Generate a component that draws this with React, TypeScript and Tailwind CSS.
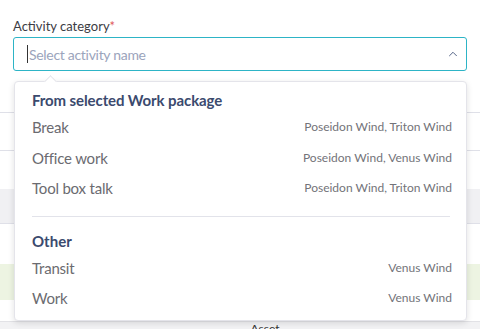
import { ChevronUp } from "lucide-react";

const fromPackage = [
  { name: "Break", sites: "Poseidon Wind, Triton Wind" },
  { name: "Office work", sites: "Poseidon Wind, Venus Wind" },
  { name: "Tool box talk", sites: "Poseidon Wind, Triton Wind" },
];

const other = [
  { name: "Transit", sites: "Venus Wind" },
  { name: "Work", sites: "Venus Wind" },
];

function Option({ name, sites }: { name: string; sites: string }) {
  return (
    <div className="flex h-[30.5px] items-center justify-between">
      <span className="text-[15px] tracking-[-0.2px] text-[#6b6b70]">{name}</span>
      <span className="text-[12px] text-[#737379]">{sites}</span>
    </div>
  );
}

export default function App() {
  return (
    <div className="relative h-[329px] w-[480px] overflow-hidden bg-white font-['Lato',sans-serif]">
      <div className="px-[13px] pt-[18px]">
        <label className="block text-[13px] leading-[17px] text-[#3c3c44]">
          Activity category<span className="text-[#e05a5a]">*</span>
        </label>
        <div className="mt-[2px] flex h-[34px] items-center rounded-[3px] border border-[#2db4c6] pl-[13px] pr-[6px]">
          <span className="mr-[1px] h-[18px] w-px bg-[#333]" />
          <span className="flex-1 text-[14px] tracking-[-0.3px] text-[#9ba4bc]">Select activity name</span>
          <ChevronUp className="h-[14px] w-[14px] text-[#4a5a80]" strokeWidth={1.6} />
        </div>
      </div>

      {/* page content behind the open menu */}
      <div className="mt-[41px]">
        <div className="h-[38px] border-t border-[#dfe0e8]" />
        <div className="h-[39px] border-t border-[#dfe0e8]" />
        <div className="h-[35px] border-b border-[#dfe0e8] bg-[#f0f0f3]" />
        <div className="h-[40px]" />
        <div className="h-[36px] bg-[#edf4e2]" />
        <div className="h-[21px]" />
        <div className="flex h-[20px] justify-center border-t border-[#e2e2e6] bg-[#f2f2f4] pl-[50px] text-[12px] leading-[14px] text-[#333]">
          Asset
        </div>
      </div>

      <div className="absolute left-[14px] top-[81px] h-[240px] w-[453px] rounded-[4px] border border-[#e4e4ea] bg-white pl-[17px] pr-[14px] pt-[7px] shadow-[0_2px_6px_rgba(0,0,0,0.12)]">
        <div className="absolute -top-[5px] left-[31px] h-[9px] w-[9px] rotate-45 border-l border-t border-[#e4e4ea] bg-white" />
        <div className="h-[23px] text-[15px] font-bold leading-[22px] tracking-[-0.1px] text-[#3b4a6e]">From selected Work package</div>
        {fromPackage.map((o) => (
          <Option key={o.name} {...o} />
        ))}
        <div className="mr-[2px] mt-[12px] h-px bg-[#e2e3ea]" />
        <div className="mt-[13px] h-[23px] text-[15px] font-bold leading-[22px] text-[#3b4a6e]">Other</div>
        {other.map((o) => (
          <Option key={o.name} {...o} />
        ))}
      </div>
    </div>
  );
}
